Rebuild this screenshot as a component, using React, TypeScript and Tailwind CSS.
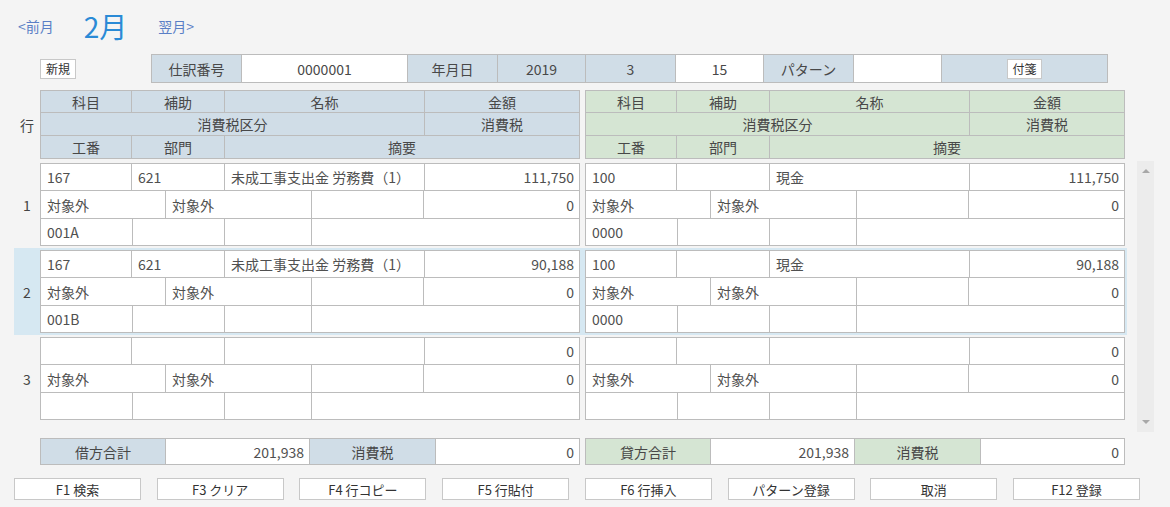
import React from "react";

type Side = {
  kamoku: string;
  hojo: string;
  name: string;
  amt: string;
  tax1: string;
  tax2: string;
  tax: string;
  kou: string;
};

type Row = { n: number; l: Side; r: Side; selected?: boolean };

const rows: Row[] = [
  {
    n: 1,
    l: { kamoku: "167", hojo: "621", name: "未成工事支出金 労務費（1）", amt: "111,750", tax1: "対象外", tax2: "対象外", tax: "0", kou: "001A" },
    r: { kamoku: "100", hojo: "", name: "現金", amt: "111,750", tax1: "対象外", tax2: "対象外", tax: "0", kou: "0000" },
  },
  {
    n: 2,
    selected: true,
    l: { kamoku: "167", hojo: "621", name: "未成工事支出金 労務費（1）", amt: "90,188", tax1: "対象外", tax2: "対象外", tax: "0", kou: "001B" },
    r: { kamoku: "100", hojo: "", name: "現金", amt: "90,188", tax1: "対象外", tax2: "対象外", tax: "0", kou: "0000" },
  },
  {
    n: 3,
    l: { kamoku: "", hojo: "", name: "", amt: "0", tax1: "対象外", tax2: "対象外", tax: "0", kou: "" },
    r: { kamoku: "", hojo: "", name: "", amt: "0", tax1: "対象外", tax2: "対象外", tax: "0", kou: "" },
  },
];

const buttons = ["F1 検索", "F3 クリア", "F4 行コピー", "F5 行貼付", "F6 行挿入", "パターン登録", "取消", "F12 登録"];

// plain white data cell
function C({ className = "", children }: { className?: string; children?: React.ReactNode }) {
  return (
    <div className={"flex items-center bg-white pl-[6px] pr-[5px] text-[14px] text-[#505050] whitespace-nowrap overflow-hidden " + className}>
      {children}
    </div>
  );
}

// header label cell, colour passed in full
function H({ className = "", children }: { className?: string; children?: React.ReactNode }) {
  return (
    <div className={"flex items-center justify-center text-[14px] text-[#484848] whitespace-nowrap " + className}>
      {children}
    </div>
  );
}

function HeaderBlock({ bg }: { bg: string }) {
  return (
    <div className="w-[540px] bg-[#bcbcbc] p-px flex flex-col gap-px">
      <div className="flex gap-px h-[21px]">
        <H className={"w-[90px] " + bg}>科目</H>
        <H className={"w-[92px] " + bg}>補助</H>
        <H className={"w-[199px] " + bg}>名称</H>
        <H className={"flex-1 " + bg}>金額</H>
      </div>
      <div className="flex gap-px h-[22px]">
        <H className={"w-[383px] " + bg}>消費税区分</H>
        <H className={"flex-1 " + bg}>消費税</H>
      </div>
      <div className="flex gap-px h-[22px]">
        <H className={"w-[90px] " + bg}>工番</H>
        <H className={"w-[92px] " + bg}>部門</H>
        <H className={"flex-1 " + bg}>摘要</H>
      </div>
    </div>
  );
}

function Block({ d }: { d: Side }) {
  return (
    <div className="w-[540px] bg-[#bcbcbc] p-px flex flex-col gap-px">
      <div className="flex gap-px h-[26px]">
        <C className="w-[90px]">{d.kamoku}</C>
        <C className="w-[92px]">{d.hojo}</C>
        <C className="w-[199px]">{d.name}</C>
        <C className="flex-1 justify-end">{d.amt}</C>
      </div>
      <div className="flex gap-px h-[27px]">
        <C className="w-[124px]">{d.tax1}</C>
        <C className="w-[145px]">{d.tax2}</C>
        <C className="w-[111px]" />
        <C className="flex-1 justify-end">{d.tax}</C>
      </div>
      <div className="flex gap-px h-[26px]">
        <C className="w-[91px]">{d.kou}</C>
        <C className="w-[91px]" />
        <C className="w-[86px]" />
        <C className="flex-1" />
      </div>
    </div>
  );
}

function Totals({ label, bg, amt, tax }: { label: string; bg: string; amt: string; tax: string }) {
  return (
    <div className="w-[540px] h-[27px] bg-[#bcbcbc] p-px flex gap-px">
      <H className={"w-[124px] " + bg}>{label}</H>
      <C className="w-[143px] justify-end">{amt}</C>
      <H className={"w-[125px] " + bg}>消費税</H>
      <C className="flex-1 justify-end">{tax}</C>
    </div>
  );
}

export default function App() {
  const blue = "bg-[#d0dde7]";
  const green = "bg-[#d5e5d3]";
  return (
    <div className="w-[1170px] h-[507px] bg-[#f4f4f4] overflow-hidden font-['Noto_Sans_CJK_JP','Noto_Sans',sans-serif] text-[#444] leading-none">
      {/* month nav */}
      <div className="h-[54px] flex items-center pl-[18px] pb-[2px]">
        <span className="text-[14px] text-[#5a7fc6]">&lt;前月</span>
        <span className="ml-[30px] text-[28px] text-[#2a8ad6]">2月</span>
        <span className="ml-[31px] text-[14px] text-[#5a7fc6]">翌月&gt;</span>
      </div>

      {/* journal header */}
      <div className="flex items-start pl-[40px] h-[29px]">
        <button className="mt-[5px] w-[36px] h-[20px] bg-white border border-[#c8c8c8] text-[12px] text-[#333] flex items-center justify-center">
          新規
        </button>
        <div className="ml-[75px] w-[957px] h-[29px] bg-[#bcbcbc] p-px flex gap-px">
          <H className={"w-[89px] " + blue}>仕訳番号</H>
          <H className="w-[165px] bg-white text-[#555]">0000001</H>
          <H className={"w-[89px] " + blue}>年月日</H>
          <H className={"w-[87px] " + blue}>2019</H>
          <H className={"w-[89px] " + blue}>3</H>
          <H className="w-[87px] bg-white text-[#555]">15</H>
          <H className={"w-[89px] " + blue}>パターン</H>
          <H className="w-[87px] bg-white" />
          <div className={"flex-1 flex items-center justify-center " + blue}>
            <button className="w-[35px] h-[20px] bg-white border border-[#c8c8c8] text-[12px] text-[#333] flex items-center justify-center">
              付箋
            </button>
          </div>
        </div>
      </div>

      {/* column headers */}
      <div className="mt-[7px] flex pl-[14px]">
        <div className="w-[26px] flex items-center justify-center text-[14px] text-[#444]">行</div>
        <HeaderBlock bg={blue} />
        <div className="w-[5px]" />
        <HeaderBlock bg={green} />
      </div>

      {/* rows + scrollbar */}
      <div className="mt-[2px] flex h-[271px] pl-[14px]">
        <div className="flex flex-col">
          {rows.map((r) => (
            <div key={r.n} className={"flex py-[2px] pr-[2px] " + (r.selected ? "bg-[#d6e8f2]" : "")}>
              <div className="w-[26px] flex items-center justify-center text-[14px] text-[#444]">{r.n}</div>
              <Block d={r.l} />
              <div className="w-[5px]" />
              <Block d={r.r} />
            </div>
          ))}
        </div>
        <div className="ml-[10px] w-[17px] h-[271px] bg-[#ececec] flex flex-col items-center justify-between py-[8px]">
          <div className="w-0 h-0 border-l-[4px] border-r-[4px] border-b-[4px] border-l-transparent border-r-transparent border-b-[#a8a8a8]" />
          <div className="w-0 h-0 border-l-[4px] border-r-[4px] border-t-[4px] border-l-transparent border-r-transparent border-t-[#a8a8a8]" />
        </div>
      </div>

      {/* totals */}
      <div className="mt-[6px] flex pl-[40px]">
        <Totals label="借方合計" bg={blue} amt="201,938" tax="0" />
        <div className="w-[5px]" />
        <Totals label="貸方合計" bg={green} amt="201,938" tax="0" />
      </div>

      {/* function keys */}
      <div className="mt-[13px] ml-[14px] w-[1126px] flex justify-between">
        {buttons.map((b) => (
          <button
            key={b}
            className="w-[127px] h-[22px] bg-white border border-[#c8c8c8] text-[13px] text-[#333] flex items-center justify-center"
          >
            {b}
          </button>
        ))}
      </div>
    </div>
  );
}
